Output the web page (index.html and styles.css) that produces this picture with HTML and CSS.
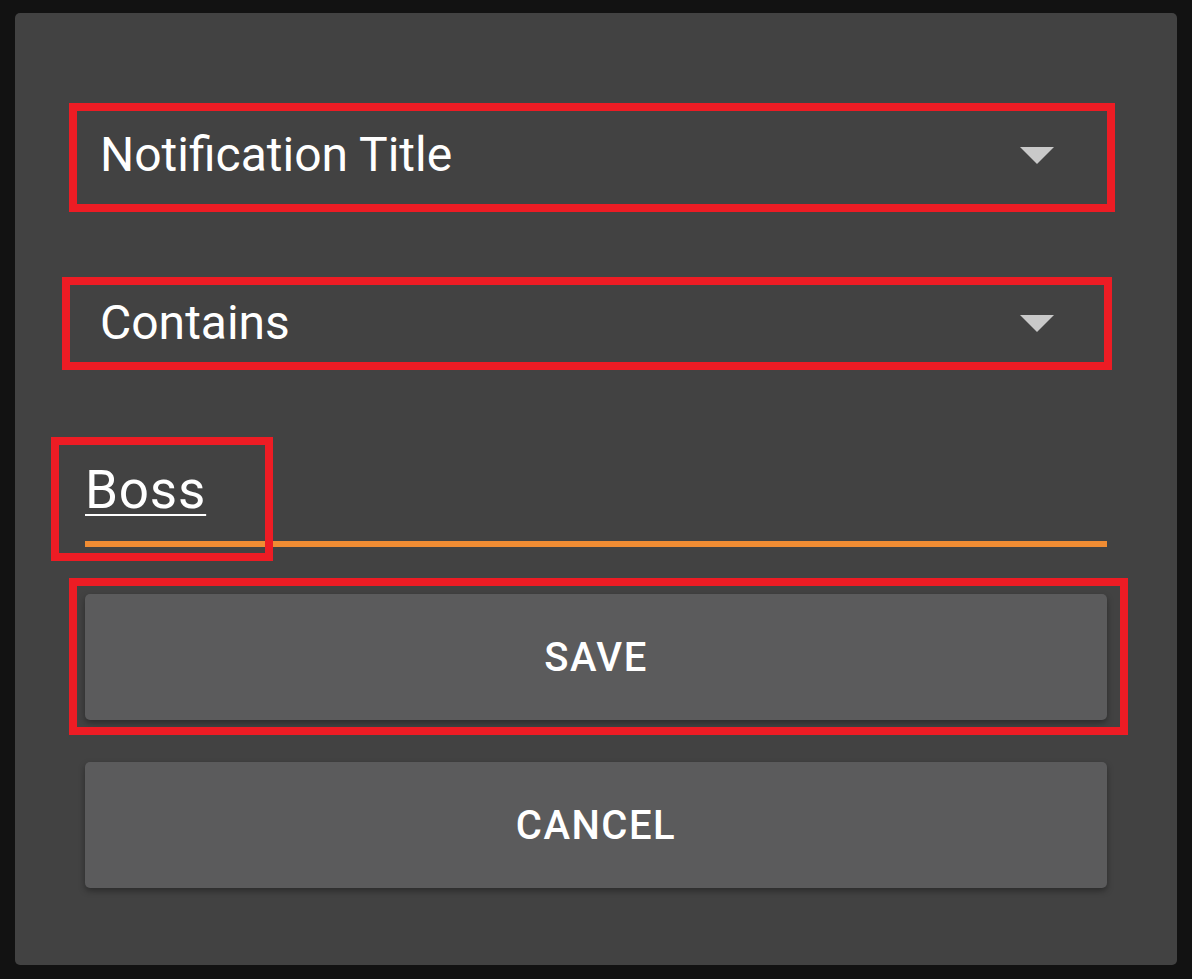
FILE: index.html
```html
<!DOCTYPE html>
<html>
<head>
<meta charset="utf-8">
<link rel="stylesheet" href="styles.css">
</head>
<body>
<div class="dialog">
  <div class="spinner">
    <span class="spinner-text">Notification Title</span>
    <span class="arrow"></span>
  </div>
  <div class="spinner spinner-second">
    <span class="spinner-text">Contains</span>
    <span class="arrow"></span>
  </div>
  <div class="field">
    <span class="field-text">Boss</span>
  </div>
  <button class="btn btn-save">SAVE</button>
  <button class="btn btn-cancel">CANCEL</button>

  <div class="mark mark-1"></div>
  <div class="mark mark-2"></div>
  <div class="mark mark-3"></div>
  <div class="mark mark-4"></div>
</div>
</body>
</html>
```

FILE: styles.css
```css
html, body {
  margin: 0;
  padding: 0;
  background: #121212;
}
body {
  padding: 13px 15px 14px 15px;
  font-family: Roboto, "Noto Sans", "Liberation Sans", sans-serif;
}
.dialog {
  position: relative;
  width: 1162px;
  box-sizing: border-box;
  background: #424242;
  border-radius: 5px;
  padding: 93px 70px 77px 70px;
  display: flex;
  flex-direction: column;
}
.spinner {
  height: 96px;
  display: flex;
  align-items: center;
  justify-content: space-between;
  padding: 0 53px 0 15px;
}
.spinner-second {
  margin-top: 72px;
}
.spinner-text {
  color: #ffffff;
  font-size: 48px;
  line-height: 60px;
  margin-top: 2px;
}
.arrow {
  width: 0;
  height: 0;
  border-left: 17px solid transparent;
  border-right: 17px solid transparent;
  border-top: 17px solid #c9c9c9;
  margin-top: 2px;
}
.field {
  margin-top: 89px;
  padding-bottom: 22px;
  border-bottom: 6px solid #f08c33;
  line-height: 60px;
  height: 60px;
}
.field-text {
  color: #ffffff;
  font-size: 53px;
  letter-spacing: 0.8px;
  line-height: 60px;
  text-decoration: underline;
  text-decoration-thickness: 2px;
  text-underline-offset: 6px;
  position: relative;
  top: 1px;
}
.btn {
  height: 126px;
  border: none;
  border-radius: 5px;
  background: #5b5b5c;
  color: #ffffff;
  font-family: Roboto, "Noto Sans", "Liberation Sans", sans-serif;
  font-size: 40px;
  font-weight: 500;
  letter-spacing: 1.5px;
  box-shadow: 0 3px 6px rgba(0, 0, 0, 0.35);
  padding: 0;
}
.btn-save {
  margin-top: 47px;
}
.btn-cancel {
  margin-top: 42px;
}
.mark {
  position: absolute;
  border: 8px solid #ed1c24;
  box-sizing: border-box;
  pointer-events: none;
}
.mark-1 {
  left: 54px;
  top: 90px;
  width: 1046px;
  height: 109px;
}
.mark-2 {
  left: 47px;
  top: 264px;
  width: 1050px;
  height: 93px;
}
.mark-3 {
  left: 36px;
  top: 424px;
  width: 222px;
  height: 124px;
}
.mark-4 {
  left: 54px;
  top: 565px;
  width: 1059px;
  height: 157px;
}
```
